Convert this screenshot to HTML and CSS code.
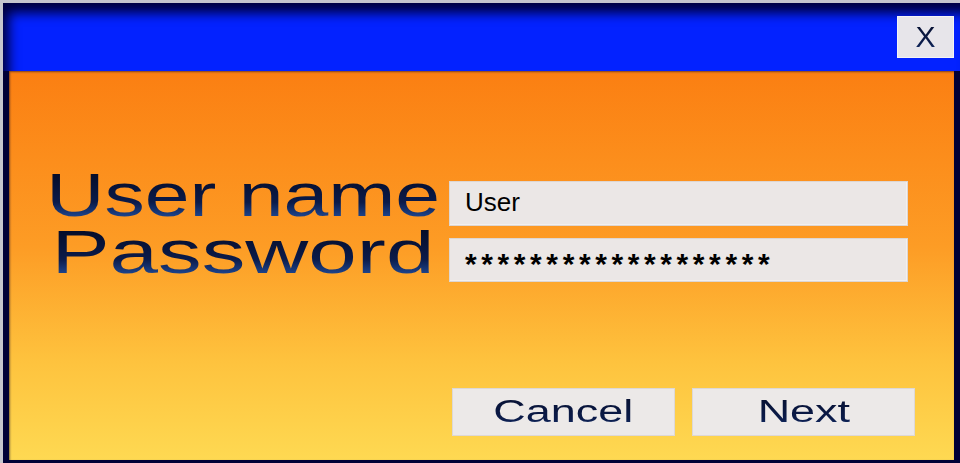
FILE: index.html
```html
<!DOCTYPE html>
<html lang="en">
<head>
    <meta charset="UTF-8">
    <meta name="viewport" content="width=device-width, initial-scale=1.0">
    <title>Login</title>
    <link rel="stylesheet" href="styles.css">
</head>
<body>
    <div class="window">
        <div class="titlebar">
            <button class="close"><span class="ink">X</span></button>
        </div>
        <div class="panel">
            <div class="form">
                <div class="label"><span class="ink wide">User name</span></div>
                <div class="field">User</div>
                <div class="label"><span class="ink wider">Password</span></div>
                <div class="field secret">*******************</div>
            </div>
            <div class="actions">
                <button class="btn"><span class="ink stretch">Cancel</span></button>
                <button class="btn"><span class="ink stretch">Next</span></button>
            </div>
        </div>
    </div>
</body>
</html>
```

FILE: styles.css
```css
html, body {
    margin: 0;
    padding: 0;
    height: 100%;
    overflow: hidden;
}

body {
    background: #c6c6ce;
    font-family: 'Liberation Sans', Arial, sans-serif;
}

/* Window frame */
.window {
    margin: 3px 0 0 3px;
    height: 460px;
    background: #000036;
    display: flex;
    flex-direction: column;
}

.titlebar {
    height: 68px;
    box-sizing: border-box;
    padding: 13px 6px 0 0;
    background: #0322ff;
    box-shadow: inset 8px 12px 12px -2px #000040;
    display: flex;
    justify-content: flex-end;
    align-items: flex-start;
}

.close {
    width: 57px;
    height: 42px;
    padding: 0;
    background: #e7e5ea;
    border: 1px solid #f4f3f6;
    font-family: inherit;
    font-size: 30px;
    line-height: 40px;
    cursor: pointer;
}

/* Gradient text used for labels and button captions */
.ink {
    display: inline-block;
    background: linear-gradient(#050c28, #0b1b4a 65%, #1f4892 100%);
    -webkit-background-clip: text;
    background-clip: text;
    color: transparent;
}

.wide {
    transform: scaleX(1.32);
}

.wider {
    transform: scaleX(1.43);
}

.stretch {
    transform: scaleX(1.45);
}

/* Orange body of the dialog */
.panel {
    flex: 1;
    margin: 0 6px 3px 6px;
    padding: 110px 0 24px 0;
    display: flex;
    flex-direction: column;
    background: linear-gradient(#fb7f12, #fd9c25 45%, #fec33e 75%, #fed952);
    box-shadow: inset 1px 1px 2px rgba(0, 0, 40, 0.5);
}

.form {
    display: grid;
    grid-template-columns: 412px 459px;
    grid-auto-rows: 45px;
    row-gap: 12px;
    padding-left: 28px;
}

.label {
    align-self: start;
    margin-top: -8px;
    text-align: center;
    font-size: 61px;
    line-height: 45px;
    white-space: nowrap;
}

.field {
    box-sizing: border-box;
    background: #ebe7e6;
    border: 1px solid #ddd6d2;
    box-shadow: inset -1px -1px 0 #f3f0ef;
    padding-left: 15px;
    font-size: 26px;
    line-height: 41px;
    color: #000;
}

.field.secret {
    height: 44px;
    padding-top: 4px;
    font-size: 30px;
    font-weight: bold;
    letter-spacing: 4.6px;
}

/* Cancel / Next */
.actions {
    margin-top: auto;
    display: flex;
    justify-content: flex-end;
    gap: 17px;
    padding-right: 39px;
}

.btn {
    width: 223px;
    height: 48px;
    padding: 0;
    background: #ece9e8;
    border: 1px solid #ddd8d6;
    font-family: inherit;
    font-size: 31px;
    line-height: 46px;
    cursor: pointer;
}
```
